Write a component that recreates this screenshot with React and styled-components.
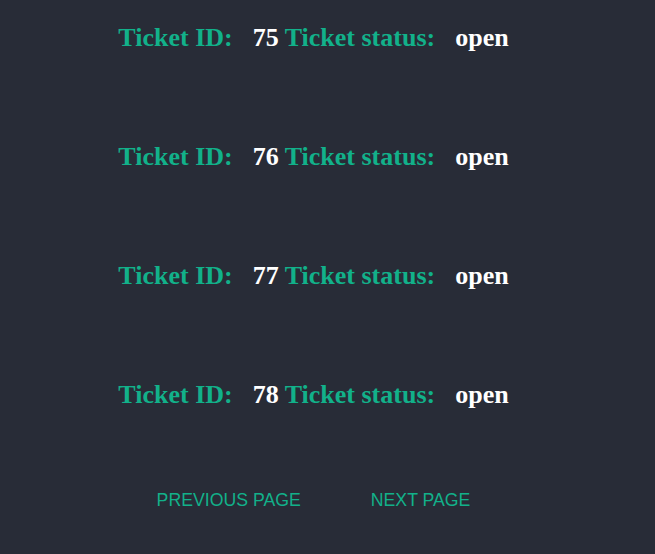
import React from "react";
import styled, { createGlobalStyle } from "styled-components";

const GlobalStyle = createGlobalStyle`
  html, body {
    margin: 0;
    padding: 0;
    background: #282c37;
  }
  body {
    font-family: "Liberation Serif", "Times New Roman", serif;
  }
`;

const tickets = [
  { id: 75, status: "open" },
  { id: 76, status: "open" },
  { id: 77, status: "open" },
  { id: 78, status: "open" },
];

const App = () => {
  return (
    <>
      <GlobalStyle />
      <StPage>
        <StList>
          {tickets.map((ticket) => (
            <StTicket key={ticket.id}>
              <StLabel>Ticket ID:</StLabel>
              <StValue $gap={6}>{ticket.id}</StValue>
              <StLabel>Ticket status:</StLabel>
              <StValue>{ticket.status}</StValue>
            </StTicket>
          ))}
        </StList>
        <StPager>
          <StPageButton>Previous page</StPageButton>
          <StPageButton>Next page</StPageButton>
        </StPager>
      </StPage>
    </>
  );
};

export default App;

const StPage = styled.div`
  min-height: 554px;
  box-sizing: border-box;
  padding: 23px 28px 0 0;
  display: flex;
  flex-direction: column;
  align-items: center;
`;

const StList = styled.div`
  display: flex;
  flex-direction: column;
  gap: 90px;
`;

const StTicket = styled.div`
  display: flex;
  align-items: baseline;
  font-size: 26px;
  font-weight: 700;
  line-height: 29px;
`;

const StLabel = styled.span`
  color: #12b18a;
  margin-right: 20px;
`;

const StValue = styled.span`
  color: #ffffff;
  margin-right: ${(props) => props.$gap || 0}px;
`;

const StPager = styled.div`
  display: flex;
  gap: 70px;
  margin-top: 81px;
`;

const StPageButton = styled.button`
  background: none;
  border: none;
  padding: 0;
  color: #12b18a;
  font-family: "Liberation Sans", Arial, sans-serif;
  font-size: 17.7px;
  line-height: 20px;
  text-transform: uppercase;
  cursor: pointer;
`;
